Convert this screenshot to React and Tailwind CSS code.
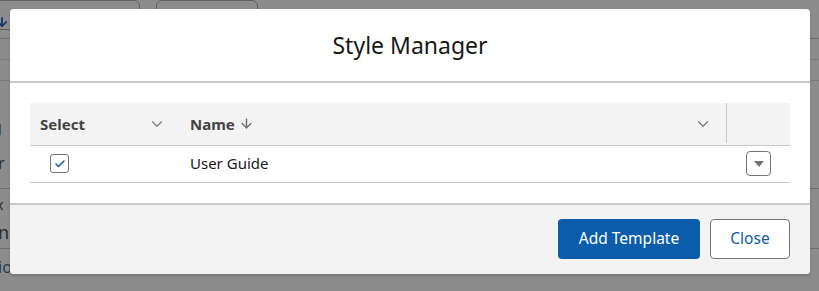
import { ChevronDown, ArrowDown, Check } from 'lucide-react';

// Faint page content showing through the backdrop
function Backdrop() {
  return (
    <div className="flex h-[291px] w-[819px] flex-col bg-[#8c8c8c] overflow-hidden text-[16px] leading-none text-[#2a2a2a]">
      <div className="flex h-[39px] shrink-0 border-b border-[#6e6e6e]">
        <div className="w-[10px] flex items-end pb-[9px] text-[#0b3866]">
          <ArrowDown size={14} strokeWidth={3} className="-ml-[5px]" />
        </div>
        <div className="ml-[-20px] h-[30px] w-[150px] rounded-md border border-[#5e5e5e]" />
        <div className="ml-[16px] h-[30px] w-[102px] rounded-md border border-[#5e5e5e]" />
      </div>
      <div className="h-[21px] shrink-0 border-b border-[#7a7a7a]" />
      <div className="h-[21px] shrink-0 border-b border-[#7a7a7a]" />
      <div className="flex h-[108px] shrink-0 flex-col border-b border-[#6e6e6e]">
        <div className="mt-[38px] -ml-[8px]">g</div>
        <div className="mt-[20px] -ml-[2px]">r</div>
      </div>
      <div className="flex h-[60px] shrink-0 flex-col border-b border-[#6e6e6e]">
        <div className="mt-[9px] -ml-[4px] text-[14px]">x</div>
        <div className="mt-[11px] -ml-[2px] text-[18px]">ni</div>
      </div>
      <div className="mt-[10px] -ml-[2px] text-[#243c57]">io</div>
    </div>
  );
}

export default function App() {
  const font = { fontFamily: '"Noto Sans", "Open Sans", sans-serif' };
  return (
    <div className="relative h-[291px] w-[819px] overflow-hidden" style={font}>
      <Backdrop />

      {/* Modal */}
      <div className="absolute left-[10px] top-[9px] w-[800px] rounded-[4px] bg-white shadow-[0_2px_3px_rgba(0,0,0,0.16)] overflow-hidden">
        <header className="flex h-[74px] items-center justify-center border-b-2 border-[#c9c9c9]">
          <h2 className="text-[23px] text-[#181818]">Style Manager</h2>
        </header>

        <div className="p-[20px]">
          <table className="w-full border-collapse text-[15px] text-[#181818]">
            <thead>
              <tr className="h-[42px] bg-[#f3f3f3] border-b border-[#c9c9c9]">
                <th className="w-[150px] pl-[10px] text-left font-bold text-[#444]">
                  <div className="flex items-center justify-between pr-[14px]">
                    <span>Select</span>
                    <ChevronDown size={18} strokeWidth={1.5} className="text-[#747474]" />
                  </div>
                </th>
                <th className="pl-[10px] text-left font-bold text-[#444]">
                  <div className="flex items-center justify-between pr-[14px]">
                    <span className="flex items-center gap-[4px]">
                      Name
                      <ArrowDown size={15} strokeWidth={2.25} className="text-[#6b6b6b]" />
                    </span>
                    <ChevronDown size={18} strokeWidth={1.5} className="text-[#747474]" />
                  </div>
                </th>
                <th className="w-[64px] relative">
                  <div className="absolute left-0 top-0 h-[40px] border-l border-[#c9c9c9]" />
                </th>
              </tr>
            </thead>
            <tbody>
              <tr className="h-[37px] border-b border-[#c9c9c9]">
                <td className="pl-[20px]">
                  <div className="flex h-[19px] w-[19px] items-center justify-center rounded-[3px] border border-[#747474] bg-white">
                    <Check size={12} strokeWidth={3} className="text-[#0b5cab]" />
                  </div>
                </td>
                <td className="pl-[10px]">User Guide</td>
                <td>
                  <div className="ml-[20px] flex h-[25px] w-[25px] items-center justify-center rounded-[4px] border border-[#747474] bg-white">
                    <svg width="10" height="6" viewBox="0 0 10 6">
                      <path d="M0 0 L10 0 L5 6 Z" fill="#747474" />
                    </svg>
                  </div>
                </td>
              </tr>
            </tbody>
          </table>
        </div>

        <footer className="flex h-[71px] items-center justify-end gap-[10px] border-t-2 border-[#c9c9c9] bg-[#f3f3f3] pr-[20px]">
          <button className="h-[40px] w-[142px] rounded-[4px] bg-[#0b5cab] text-[15.5px] text-white">
            Add Template
          </button>
          <button className="h-[40px] w-[80px] rounded-[4px] border border-[#747474] bg-white text-[15.5px] text-[#0b5cab]">
            Close
          </button>
        </footer>
      </div>
    </div>
  );
}
